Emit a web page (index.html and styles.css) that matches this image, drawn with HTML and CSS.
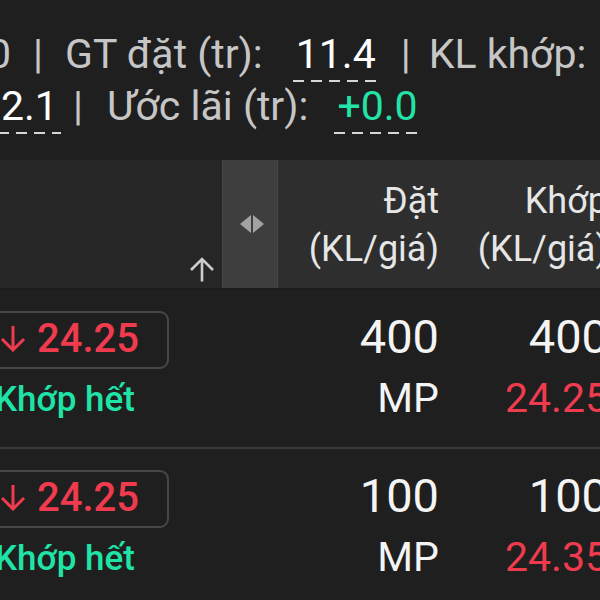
FILE: index.html
```html
<!DOCTYPE html>
<html lang="vi">
<head>
  <meta charset="UTF-8" />
  <meta name="viewport" content="width=device-width, initial-scale=1.0"/>
  <title>Sổ lệnh</title>
  <link rel="stylesheet" href="styles.css">
</head>
<body>

  <div class="summary">
    <div class="line l1"><span>0</span><span class="sep">|</span><span>GT đặt (tr):</span><span class="val v1">11.4</span><span class="sep s1">|</span><span>KL khớp:</span></div>
    <div class="line l2"><span class="val">2.1</span><span class="sep s2">|</span><span>Ước lãi (tr):</span><span class="val v2 up">+0.0</span></div>
  </div>

  <div class="table">
    <div class="thead">
      <div class="th first">
        <svg width="26" height="25" viewBox="0 0 26 25"><path d="M13 24.5V2M2 13L13 2l11 11" stroke="#cdcdcd" stroke-width="2.6" fill="none"/></svg>
      </div>
      <div class="th sticky">
        <svg width="24" height="18" viewBox="0 0 24 18"><path d="M11 0L0 9l11 9zM13 0l11 9-11 9z" fill="#a2a2a2"/></svg>
      </div>
      <div class="th num">Đặt<br>(KL/giá)</div>
      <div class="th num">Khớp<br>(KL/giá)</div>
    </div>

    <div class="row">
      <div class="cell first">
        <div class="pbox">
          <svg width="26" height="27" viewBox="0 0 26 27"><path d="M13 1v24M2 14l11 11 11-11" stroke="currentColor" stroke-width="3" fill="none"/></svg>
          <span class="ptext">24.25</span>
        </div>
        <div class="status">Khớp hết</div>
      </div>
      <div class="cell"></div>
      <div class="cell num">
        <div class="qty">400</div>
        <div class="price">MP</div>
      </div>
      <div class="cell num">
        <div class="qty">400</div>
        <div class="price red">24.25</div>
      </div>
    </div>

    <div class="row">
      <div class="cell first">
        <div class="pbox">
          <svg width="26" height="27" viewBox="0 0 26 27"><path d="M13 1v24M2 14l11 11 11-11" stroke="currentColor" stroke-width="3" fill="none"/></svg>
          <span class="ptext">24.25</span>
        </div>
        <div class="status">Khớp hết</div>
      </div>
      <div class="cell"></div>
      <div class="cell num">
        <div class="qty">100</div>
        <div class="price">MP</div>
      </div>
      <div class="cell num">
        <div class="qty">100</div>
        <div class="price red">24.35</div>
      </div>
    </div>
  </div>

</body>
</html>
```

FILE: styles.css
```css
body {
  margin: 0;
  width: 600px;
  height: 600px;
  overflow: hidden;
  background: #1f1f1f;
  font-family: Roboto, "Noto Sans", sans-serif;
}
.summary {
  height: 160px;
  box-sizing: border-box;
  padding-top: 28px;
  font-size: 41px;
  line-height: 52px;
  color: #c6c6c6;
}
.line {
  white-space: nowrap;
}
.l1 {
  margin-left: -12px;
}
.l2 {
  margin-left: -2px;
}
.sep {
  margin: 0 22px;
}
.s1 {
  margin: 0 18px 0 22px;
}
.s2 {
  margin: 0 24px 0 12px;
}
.val {
  color: #fff;
  padding: 0 3px 4px;
  background: repeating-linear-gradient(to right, #d6d6d6 0 11px, transparent 11px 18px) left bottom / 100% 2px no-repeat;
}
.v1 {
  margin-left: 30px;
}
.v2 {
  margin-left: 26px;
}
.up {
  color: #22e3a8;
}
.thead,
.row {
  display: grid;
  grid-template-columns: 222px 56px 169px 169px;
}
.thead {
  height: 128px;
  border-bottom: 2px solid #1b1b1b;
}
.th.first {
  background: #262626;
  display: flex;
  justify-content: flex-end;
  align-items: flex-end;
  padding: 0 7px 6px 0;
}
.th.sticky {
  background: #3e3e3e;
  border-left: 1px solid #474747;
  border-right: 1px solid #474747;
  display: flex;
  align-items: center;
  justify-content: center;
  padding-left: 3px;
}
.th.num {
  background: #2e2e2e;
  text-align: right;
  padding: 17px 8px 0 0;
  font-size: 36px;
  line-height: 48px;
  color: #e6e6e6;
}
.row {
  height: 157px;
  border-bottom: 2px solid #393939;
}
.cell.first {
  padding-top: 21px;
}
.pbox {
  margin-left: -16px;
  width: 185px;
  height: 58px;
  box-sizing: border-box;
  border: 2px solid #474747;
  border-radius: 9px;
  display: flex;
  align-items: center;
  padding: 0 0 3px 14px;
  color: #f03b4e;
  font-size: 40px;
  font-weight: 500;
}
.ptext {
  margin-left: 11px;
}
.status {
  margin: 8px 0 0 -5px;
  color: #1fe4a8;
  font-size: 35px;
  font-weight: 500;
  line-height: 46px;
}
.cell.num {
  text-align: right;
  padding: 18px 8px 0 0;
  color: #f4f4f4;
}
.qty {
  font-size: 47px;
  line-height: 57px;
}
.price {
  font-size: 41px;
  line-height: 66px;
}
.red {
  color: #f03b4e;
}
```
